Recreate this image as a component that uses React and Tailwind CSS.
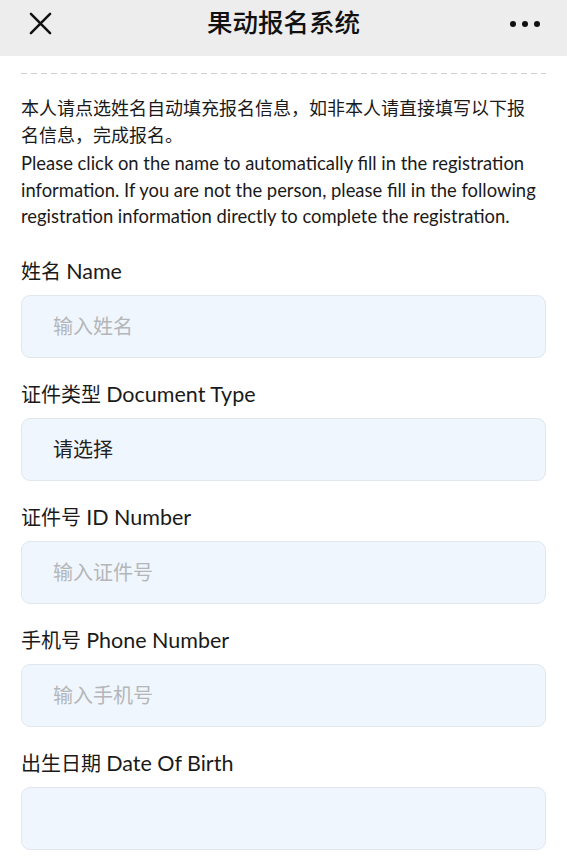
import React from "react";

const font = { fontFamily: '"Lato", "Noto Sans CJK SC", sans-serif' };

function Field({ zh, en, placeholder, value }) {
  return (
    <div className="flex flex-col">
      <div className="text-[20px] leading-[26px] text-[#1a1a1a] whitespace-nowrap">
        {zh} <span className="text-[21.5px]">{en}</span>
      </div>
      <div className="mt-[11px] h-[63px] rounded-[9px] border border-[#e2e7ee] bg-[#f0f6fd] flex items-center pl-[31px] text-[20px]">
        {value ? (
          <span className="text-[#222]">{value}</span>
        ) : (
          <span className="text-[#b4b6b9]">{placeholder}</span>
        )}
      </div>
    </div>
  );
}

export default function App() {
  return (
    <div className="w-[567px] h-[861px] bg-white overflow-hidden" style={font}>
      <div className="h-[56px] bg-[#ededed] flex items-center justify-between pl-[29px] pr-[27px] relative">
        <svg width="23" height="23" viewBox="0 0 24 24" className="mt-[-9px]">
          <path d="M2 2 L22 22 M22 2 L2 22" stroke="#111" strokeWidth="2.6" strokeLinecap="round" />
        </svg>
        <div className="absolute left-0 right-0 top-[5px] text-center text-[25.5px] leading-[34px] font-medium text-[#111] pointer-events-none">
          果动报名系统
        </div>
        <div className="flex gap-[6px] mt-[-9px]">
          <span className="w-[6px] h-[6px] rounded-full bg-[#111]" />
          <span className="w-[6px] h-[6px] rounded-full bg-[#111]" />
          <span className="w-[6px] h-[6px] rounded-full bg-[#111]" />
        </div>
      </div>
      <div className="px-[21px]">
        <div className="mt-[17px] h-[1px] bg-[linear-gradient(to_right,#cfcfcf_60%,transparent_0)] bg-[length:10px_1px]" />
        <div className="mt-[21px] text-[#1a1a1a]">
          <div className="w-[516px] text-[18px] leading-[27px]">
            本人请点选姓名自动填充报名信息，如非本人请直接填写以下报名信息，完成报名。
          </div>
          <div className="mt-[1px] text-[18.4px] leading-[26.5px]">
            Please click on the name to automatically fill in the registration information. If you are not the person, please fill in the following registration information directly to complete the registration.
          </div>
        </div>
        <div className="mt-[28px] flex flex-col gap-[23px]">
          <Field zh="姓名" en="Name" placeholder="输入姓名" />
          <Field zh="证件类型" en="Document Type" value="请选择" />
          <Field zh="证件号" en="ID Number" placeholder="输入证件号" />
          <Field zh="手机号" en="Phone Number" placeholder="输入手机号" />
          <Field zh="出生日期" en="Date Of Birth" placeholder="" />
        </div>
      </div>
    </div>
  );
}
